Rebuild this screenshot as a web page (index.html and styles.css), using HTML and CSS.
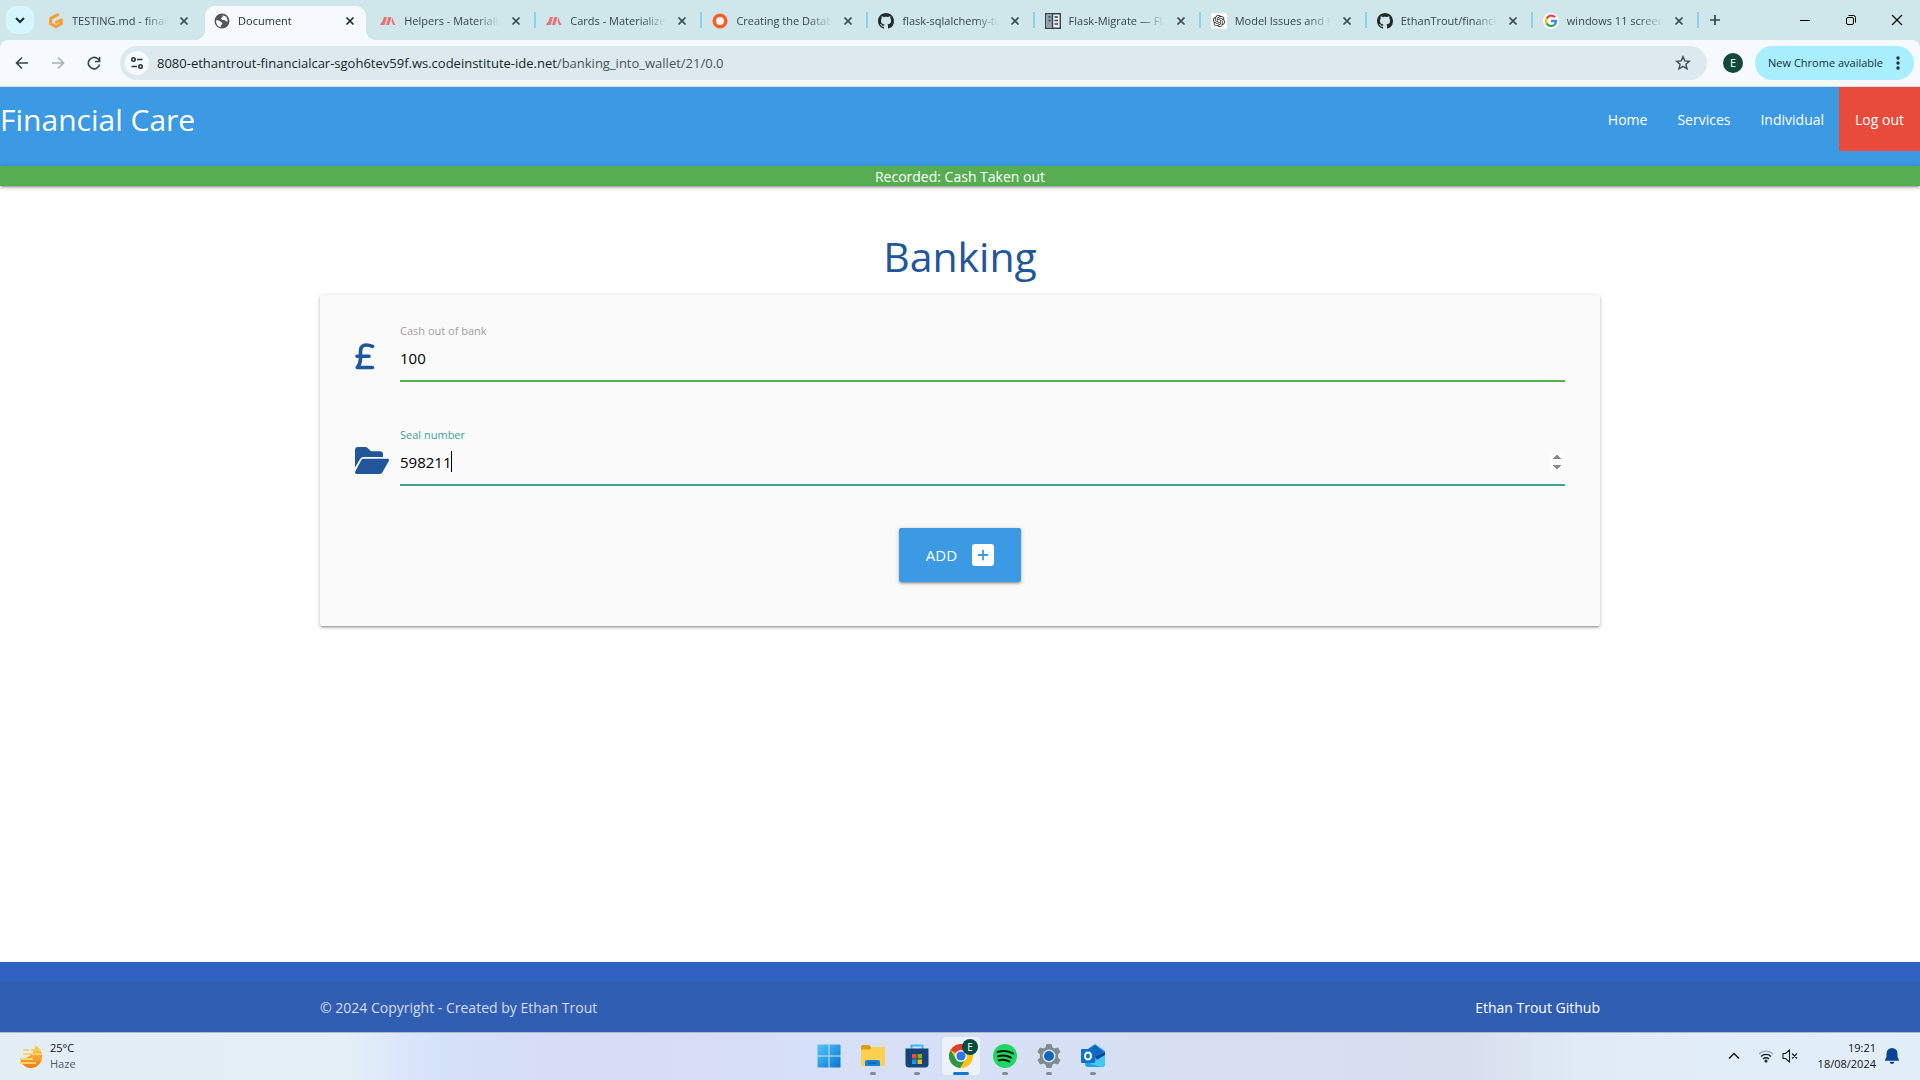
FILE: index.html
```html
<!DOCTYPE html>
<html lang="en">
<head>
<meta charset="utf-8">
<meta name="viewport" content="width=device-width, initial-scale=1">
<title>Document</title>
<link rel="stylesheet" href="styles.css">
</head>
<body>
<svg class="defs" aria-hidden="true">
  <symbol id="close" viewBox="0 0 10 10"><path d="M1.5 1.5l7 7M8.500 1.500l-7 7" fill="none" stroke="currentColor" stroke-width="1.700"/></symbol>
  <symbol id="github" viewBox="0 0 16 16"><path fill="#24292f" d="M8 0C3.580 0 0 3.580 0 8c0 3.540 2.290 6.530 5.470 7.590.4.070.55-.17.55-.38 0-.19-.01-.82-.01-1.490-2.010.37-2.530-.49-2.690-.94-.09-.23-.48-.94-.82-1.130-.28-.15-.68-.52-.01-.53.63-.01 1.080.58 1.230.82.72 1.210 1.870.87 2.330.66.07-.52.28-.87.51-1.070-1.780-.2-3.640-.89-3.640-3.950 0-.87.31-1.590.82-2.150-.08-.2-.36-1.020.08-2.120 0 0 .67-.21 2.200.82.64-.18 1.320-.27 2-.27s1.360.09 2 .27c1.530-1.040 2.200-.82 2.200-.82.44 1.100.16 1.920.08 2.120.51.56.82 1.270.82 2.150 0 3.070-1.870 3.750-3.650 3.950.29.25.54.73.54 1.480 0 1.070-.01 1.930-.01 2.200 0 .21.15.46.55.38A8 8 0 0 0 16 8c0-4.420-3.580-8-8-8z"/></symbol>
  <symbol id="materialize" viewBox="0 0 16 16"><path fill="#ee6e73" d="M4 4h3L4.500 12h-3.500zM8.500 4h3L9 12H6zM11.500 8l1-3.500 1.200 4 1.800 3.500h-2.500zM0 12l1.500-3 .8 3z"/></symbol>
</svg>

<header class="browser">
  <div class="tabstrip">
    <button class="tab-search" aria-label="Search tabs"><svg width="12" height="12" viewBox="0 0 12 12"><path d="M2 4l4 4 4-4" fill="none" stroke="#1b2b30" stroke-width="2"/></svg></button>
    <div class="tabs">
      <div class="tab no-divider"><svg class="favicon" viewBox="0 0 16 16"><path d="M9.500 1.800L2.700 5.400v5.400L8 13.800l5.300-3V6.800L8.500 9.300" fill="none" stroke="#fb9c33" stroke-width="3" stroke-linejoin="round" stroke-linecap="round"/></svg><span class="tab-title">TESTING.md - financial care</span><button class="tab-close" aria-label="Close tab"><svg><use href="#close"/></svg></button></div>
      <div class="tab active"><svg class="favicon" viewBox="0 0 16 16"><circle cx="8" cy="8" r="7.500" fill="#50555a"/><path d="M2 7.200l3 .3 2.300 1.500 1.200 1.800-1.700 1.700v1.700C4 13.500 1.700 11 2 7.200zM8.500 2.200l3.800 1.600 1.700 4.700-2.200-.3L10.500 7H8.300L6.800 5.300 8.800 4z" fill="#f6fafe"/></svg><span class="tab-title">Document</span><button class="tab-close" aria-label="Close tab"><svg><use href="#close"/></svg></button></div>
      <div class="tab"><svg class="favicon"><use href="#materialize"/></svg><span class="tab-title">Helpers - Materialize</span><button class="tab-close" aria-label="Close tab"><svg><use href="#close"/></svg></button></div>
      <div class="tab"><svg class="favicon"><use href="#materialize"/></svg><span class="tab-title">Cards - Materialize</span><button class="tab-close" aria-label="Close tab"><svg><use href="#close"/></svg></button></div>
      <div class="tab"><svg class="favicon" viewBox="0 0 16 16"><circle cx="8" cy="8" r="5.700" fill="#fff" stroke="#ff5b22" stroke-width="3.600"/></svg><span class="tab-title">Creating the Database</span><button class="tab-close" aria-label="Close tab"><svg><use href="#close"/></svg></button></div>
      <div class="tab"><svg class="favicon"><use href="#github"/></svg><span class="tab-title">flask-sqlalchemy-tutorial</span><button class="tab-close" aria-label="Close tab"><svg><use href="#close"/></svg></button></div>
      <div class="tab"><svg class="favicon" viewBox="0 0 16 16"><path d="M.7.7h14.600v14.600H.7z" fill="#eef3f5" stroke="#394149" stroke-width="1.400"/><path d="M1.500 1.500H7v13H1.500z" fill="#8fa3b0"/><path d="M7.500 1v14M3.500 4h2M3.500 7.500h2M9.500 4h3.500M9.500 7.500h3.500M9.500 11h3.500" stroke="#394149" stroke-width="1.400"/></svg><span class="tab-title">Flask-Migrate — Flask</span><button class="tab-close" aria-label="Close tab"><svg><use href="#close"/></svg></button></div>
      <div class="tab"><svg class="favicon" viewBox="-4 -4 32 32"><rect x="-4" y="-4" width="32" height="32" rx="4" fill="#fff"/><path fill="#222" d="M22.282 9.821a5.985 5.985 0 0 0-.516-4.910 6.046 6.046 0 0 0-6.510-2.900A6.065 6.065 0 0 0 4.981 4.182a5.985 5.985 0 0 0-3.998 2.900 6.046 6.046 0 0 0 .743 7.097 5.980 5.980 0 0 0 .510 4.911 6.051 6.051 0 0 0 6.515 2.900A5.985 5.985 0 0 0 13.260 24a6.056 6.056 0 0 0 5.772-4.206 5.990 5.990 0 0 0 3.998-2.900 6.056 6.056 0 0 0-.747-7.073zM13.260 22.430a4.476 4.476 0 0 1-2.876-1.041l.142-.080 4.778-2.758a.795.795 0 0 0 .393-.681v-6.737l2.020 1.169a.071.071 0 0 1 .038.052v5.583a4.504 4.504 0 0 1-4.495 4.493zM3.600 18.304a4.470 4.470 0 0 1-.535-3.014l.142.085 4.783 2.759a.771.771 0 0 0 .780 0l5.843-3.369v2.332a.080.080 0 0 1-.033.062L9.740 19.950a4.500 4.500 0 0 1-6.140-1.646zM2.341 7.896a4.485 4.485 0 0 1 2.366-1.973V11.600a.766.766 0 0 0 .388.677l5.814 3.354-2.020 1.169a.076.076 0 0 1-.071 0l-4.830-2.787A4.504 4.504 0 0 1 2.341 7.896zm16.596 3.856l-5.833-3.388L15.119 7.200a.076.076 0 0 1 .071 0l4.830 2.791a4.494 4.494 0 0 1-.676 8.105v-5.678a.790.790 0 0 0-.407-.666zm2.010-3.023l-.141-.085-4.774-2.782a.776.776 0 0 0-.785 0L9.409 9.230V6.897a.066.066 0 0 1 .028-.061l4.830-2.787a4.500 4.500 0 0 1 6.680 4.660zM8.307 12.863l-2.020-1.164a.080.080 0 0 1-.038-.057V6.075a4.500 4.500 0 0 1 7.375-3.453l-.142.080L8.704 5.460a.795.795 0 0 0-.393.681zm1.097-2.365l2.602-1.500 2.607 1.500v2.999l-2.597 1.500-2.607-1.500z"/></svg><span class="tab-title">Model Issues and Fixes</span><button class="tab-close" aria-label="Close tab"><svg><use href="#close"/></svg></button></div>
      <div class="tab"><svg class="favicon"><use href="#github"/></svg><span class="tab-title">EthanTrout/financial-care</span><button class="tab-close" aria-label="Close tab"><svg><use href="#close"/></svg></button></div>
      <div class="tab"><svg class="favicon" viewBox="0 0 16 16"><circle cx="8" cy="8" r="8" fill="#fff"/><g fill="none" stroke-width="2.300"><path d="M12 4.300A5 5 0 0 0 3.700 5.600" stroke="#ea4335"/><path d="M3.700 5.400a5 5 0 0 0 0 5.200" stroke="#fbbc04"/><path d="M3.600 10.400a5 5 0 0 0 7.600 1.500" stroke="#34a853"/><path d="M8 8h5a5 5 0 0 1-1.800 4" stroke="#4285f4"/></g></svg><span class="tab-title">windows 11 screenshot</span><button class="tab-close" aria-label="Close tab"><svg><use href="#close"/></svg></button></div>
    </div>
    <button class="new-tab" aria-label="New tab"><svg width="12" height="12" viewBox="0 0 12 12"><path d="M6 1v10M1 6h10" stroke="#33474c" stroke-width="1.700"/></svg></button>
    <div class="window-controls">
      <button aria-label="Minimize"><svg width="12" height="12" viewBox="0 0 12 12"><path d="M1 6.500h10" stroke="#000"/></svg></button>
      <button aria-label="Restore"><svg width="12" height="12" viewBox="0 0 12 12"><path d="M3.500 1.500h5a2 2 0 0 1 2 2v5" fill="none" stroke="#000"/><rect x="1.500" y="3.500" width="7" height="7" rx="1.500" fill="none" stroke="#000"/></svg></button>
      <button aria-label="Close"><svg width="12" height="12" viewBox="0 0 12 12"><path d="M1 1l10 10M11 1L1 11" stroke="#000" stroke-width="1.100"/></svg></button>
    </div>
  </div>
  <div class="toolbar">
    <div class="nav-buttons">
      <button aria-label="Back"><svg width="14" height="14" viewBox="0 0 14 14"><path d="M13 7H2M7 1.500L1.500 7 7 12.500" fill="none" stroke="#2f464b" stroke-width="1.600"/></svg></button>
      <button aria-label="Forward"><svg width="14" height="14" viewBox="0 0 14 14"><path d="M1 7h11M7 1.500L12.500 7 7 12.500" fill="none" stroke="#a5afb3" stroke-width="1.600"/></svg></button>
      <button aria-label="Reload"><svg width="14" height="14" viewBox="0 0 14 14"><path d="M12.600 8.500A5.700 5.700 0 1 1 11 3l1.500 1.500M12.600 1v4.500H8" fill="none" stroke="#2f464b" stroke-width="1.600"/></svg></button>
    </div>
    <div class="omnibox">
      <button class="site-info" aria-label="View site information"><svg width="14" height="14" viewBox="0 0 14 14"><g fill="none" stroke="#26383d" stroke-width="1.600"><circle cx="3.500" cy="3.500" r="1.700"/><path d="M7 3.500h5.500M1.500 10.500H7"/><circle cx="10.500" cy="10.500" r="1.700"/></g></svg></button>
      <span class="url"><span class="host">8080-ethantrout-financialcar-sgoh6tev59f.ws.codeinstitute-ide.net</span>/banking_into_wallet/21/0.0</span>
      <button class="star" aria-label="Bookmark this tab"><svg width="16" height="16" viewBox="0 0 16 16"><path d="M8 1.700l1.800 4.200 4.600.4-3.500 3 1.100 4.500L8 11.400l-4 2.400 1.100-4.500-3.500-3 4.600-.4z" fill="none" stroke="#3b4b50" stroke-width="1.400"/></svg></button>
    </div>
    <button class="profile" aria-label="Profile">E</button>
    <button class="update">New Chrome available<svg width="4" height="14" viewBox="0 0 4 14" fill="#173238"><circle cx="2" cy="2" r="1.700"/><circle cx="2" cy="7" r="1.700"/><circle cx="2" cy="12" r="1.700"/></svg></button>
  </div>
</header>

<div class="page">
  <nav class="site-nav">
    <a class="brand" href="#">Financial Care</a>
    <ul class="menu">
      <li><a href="#">Home</a></li>
      <li><a href="#">Services</a></li>
      <li><a href="#">Individual</a></li>
      <li><a class="logout" href="#">Log out</a></li>
    </ul>
  </nav>
  <div class="flash" role="status">Recorded: Cash Taken out</div>

  <main class="container">
    <h3 class="heading">Banking</h3>
    <form class="card">
      <div class="field">
        <svg class="prefix" viewBox="0 0 34 27"><path d="M17.500 3.400C10 .2 5.500 2.500 5.500 8v7.500c0 4-1 6.500-3.200 9H17.500M2 13.200h12" fill="none" stroke="#21569b" stroke-width="3.600" stroke-linecap="round" stroke-linejoin="round"/></svg>
        <label for="cash">Cash out of bank</label>
        <input class="valid" id="cash" type="text" inputmode="numeric" value="100">
      </div>
      <div class="field focused">
        <svg class="prefix" viewBox="0 0 34 27" fill="#21569b"><path d="M0 20.500V3a3 3 0 0 1 3-3h7.500a3 3 0 0 1 2.100.9l2.500 2.500c.6.600 1.300.9 2.100.9H25a3 3 0 0 1 3 3V10H8.500a4 4 0 0 0-3.400 2z"/><path d="M8.300 11.800H32.500c1.200 0 2 1.300 1.300 2.300l-6.500 11.300a3 3 0 0 1-2.600 1.500H1.500C.3 26.900-.4 25.600.2 24.600L6.400 13a2 2 0 0 1 1.900-1.200z"/></svg>
        <label for="seal">Seal number</label>
        <input id="seal" type="number" value="598211">
        <span class="caret"></span>
      </div>
      <button class="submit" type="button">ADD<svg width="22" height="22" viewBox="0 0 22 22"><rect width="22" height="22" rx="3" fill="#fff"/><path d="M11 6.500v9M6.500 11h9" stroke="#3c99e4" stroke-width="1.800" stroke-linecap="round"/></svg></button>
    </form>
  </main>

  <footer class="site-footer">
    <div class="copyright"><div class="container footer-row"><span>© 2024 Copyright - Created by Ethan Trout</span><a href="#">Ethan Trout Github</a></div></div>
  </footer>
</div>

<div class="taskbar">
  <div class="weather">
    <svg width="24" height="24" viewBox="0 0 24 24"><defs><linearGradient id="sun" x2="0" y2="1"><stop stop-color="#ffd34e"/><stop offset="1" stop-color="#f37a12"/></linearGradient></defs><path d="M16 1c5 3 7 7 7 11a11 11 0 0 1-22 2c5 2 15-3 15-13z" fill="url(#sun)"/><path d="M4 6h6M12 6h10M4 10h18M1 15h13M1 19h16" stroke="#f6d36b" stroke-width="2"/></svg>
    <div><div>25°C</div><div class="muted">Haze</div></div>
  </div>
  <div class="apps">
    <button aria-label="Start"><svg viewBox="0 0 24 24"><defs><linearGradient id="win" x2="1" y2="1"><stop stop-color="#52c8fa"/><stop offset="1" stop-color="#0874cf"/></linearGradient></defs><path d="M.5.500H11.500V11.500H.5zM12.500.500h11v11h-11zM.5 12.500h11v11H.5zM12.500 12.500h11v11h-11z" fill="url(#win)"/></svg></button>
    <button class="open" aria-label="File Explorer"><svg viewBox="0 0 24 24"><path d="M0 3a2 2 0 0 1 2-2h6l3 3v4H0z" fill="#dc9d10"/><path d="M0 5.500h9L11 3h13v19H0z" fill="#ffd050"/><path d="M4 22v-4a2 2 0 0 1 2-2h11a2 2 0 0 1 2 2v4z" fill="#1683d8"/><path d="M7.500 19h8" stroke="#0b61ad" stroke-width="1.500"/></svg></button>
    <button class="open" aria-label="Microsoft Store"><svg viewBox="0 0 24 24"><path d="M6.500 6V1.500h11V6" fill="none" stroke="#35bdf0" stroke-width="2"/><path d="M.5 4.500h23V20a3.500 3.500 0 0 1-3.500 3.500H4A3.500 3.500 0 0 1 .5 20z" fill="#17437c"/><path d="M7 10h4.500v4.500H7z" fill="#f25022"/><path d="M12.500 10H17v4.500h-4.500z" fill="#7fba00"/><path d="M7 15.500h4.500V20H7z" fill="#00a4ef"/><path d="M12.500 15.500H17V20h-4.500z" fill="#ffb900"/></svg></button>
    <button class="open current" aria-label="Google Chrome"><svg viewBox="0 0 24 24"><circle cx="12" cy="12" r="12" fill="#fbc116"/><path d="M12 12L1.600 6A12 12 0 0 1 22.400 6z" fill="#e33b2e"/><path d="M1.600 6A12 12 0 0 0 11 24l5.500-9L12 12 6.800 15z" fill="#289848"/><circle cx="12" cy="12" r="6" fill="#fff"/><circle cx="12" cy="12" r="4.600" fill="#2b78ee"/></svg><span class="badge">E</span></button>
    <button class="open" aria-label="Spotify"><svg viewBox="0 0 24 24"><circle cx="12" cy="12" r="12" fill="#1ed760"/><path d="M4.500 8c5-1.500 11-1 15.500 1.500M5 12.300c4.500-1.300 9-.8 13 1.400M5.800 16.200c3.800-1 7.200-.6 10.500 1.200" fill="none" stroke="#07150b" stroke-width="2" stroke-linecap="round"/></svg></button>
    <button class="open" aria-label="Settings"><svg viewBox="0 0 24 24"><path d="M9.500 0h5l1 3.500 2 1L21 3.500 23.500 8l-2.500 2.500v3l2.500 2.500-2.500 4.500-3.500-1-2 1-1 3.500h-5l-1-3.500-2-1-3.500 1L.5 16 3 13.500v-3L.5 8 3 3.500l3.500 1 2-1z" fill="#818a92"/><circle cx="12" cy="12" r="6.500" fill="#dce7ef"/><circle cx="12" cy="12" r="5" fill="#1565b8"/></svg></button>
    <button class="open" aria-label="Outlook"><svg viewBox="0 0 24 24"><path d="M4 7l10-7 10 7v13a3 3 0 0 1-3 3H7a3 3 0 0 1-3-3z" fill="#27a4e8"/><path d="M4 7l10-6 9 7-9 6z" fill="#1266bc"/><path d="M14 13l10-5v6l-6 3z" fill="#0c459e"/><path d="M9 20l15-9v9a3 3 0 0 1-3 3z" fill="#43c9f2"/><rect y="5" width="14" height="14" rx="1" fill="#0c70cf"/><ellipse cx="7" cy="12" rx="3" ry="3.500" fill="none" stroke="#fff" stroke-width="2"/></svg></button>
  </div>
  <div class="tray">
    <button class="chevron" aria-label="Show hidden icons"><svg width="12" height="12" viewBox="0 0 12 12"><path d="M1 8.500l5-5 5 5" fill="none" stroke="#111" stroke-width="1.400"/></svg></button>
    <svg class="wifi" width="16" height="14" viewBox="0 0 16 14"><g fill="none" stroke="#15202a" stroke-width="1.300"><path d="M1 5a10 10 0 0 1 14 0" stroke="#9da8b0"/><path d="M3 7.500a7 7 0 0 1 10 0M5 10a4.200 4.200 0 0 1 6 0"/></g><circle cx="8" cy="12" r="1.500" fill="#15202a"/></svg>
    <svg width="16" height="14" viewBox="0 0 16 14"><path d="M1 4.500h2.500L7.500 1v12L3.500 9.500H1zM10 4.500l5 5M15 4.500l-5 5" fill="none" stroke="#15202a" stroke-width="1.100"/></svg>
    <div class="clock"><div>19:21</div><div>18/08/2024</div></div>
    <svg class="bell" width="14" height="16" viewBox="0 0 14 16"><path d="M7 0a5.500 5.500 0 0 1 5.500 5.500V9l1.500 3v.800H0V12l1.500-3V5.500A5.500 5.500 0 0 1 7 0zM4.800 13.800h4.400a2.200 2.200 0 0 1-4.400 0z" fill="#0a4594"/></svg>
  </div>
</div>
</body>
</html>
```
FILE: styles.css
```css
* { box-sizing: border-box; }

body {
  margin: 0;
  min-height: 100vh;
  display: flex;
  flex-direction: column;
  background: #fff;
  font: 14px/20px "Open Sans", "Noto Sans", sans-serif;
}

button {
  border: 0;
  padding: 0;
  margin: 0;
  background: none;
  color: inherit;
  font: inherit;
  display: flex;
  align-items: center;
  justify-content: center;
}

a { color: inherit; text-decoration: none; }
svg { display: block; flex: none; }
.defs { width: 0; height: 0; position: absolute; }

/* Browser frame */
.browser { background: #cfe6eb; font-size: 11px; color: #33474c; }

.tabstrip { display: flex; height: 40px; align-items: center; }

.tab-search {
  width: 28px;
  height: 28px;
  margin: 0 6px;
  border-radius: 10px;
  background: #d6f6ff;
}

.tabs { display: flex; height: 100%; align-items: flex-end; flex: 0 1 1660px; min-width: 0; }

.tab {
  flex: 1 1 0;
  min-width: 0;
  height: 34px;
  padding: 0 10px 4px 9px;
  display: flex;
  align-items: center;
  gap: 8px;
  background: linear-gradient(#87d5e8, #87d5e8) right 1px top 6px / 2px 16px no-repeat;
}

.tab.no-divider { background: none; padding-left: 8px; }

.tab.active {
  color: #1c2b2f;
  background: #f6fafe;
  border-radius: 10px 10px 0 0;
  margin-right: 5px;
  padding-right: 5px;
  position: relative;
}

/* Outward curves at the foot of the selected tab */
.tab.active::before,
.tab.active::after {
  content: "";
  position: absolute;
  bottom: 0;
  width: 10px;
  height: 10px;
}
.tab.active::before { right: 100%; background: radial-gradient(circle at 0 0, transparent 10px, #f6fafe 10px); }
.tab.active::after { left: 100%; background: radial-gradient(circle at 100% 0, transparent 10px, #f6fafe 10px); }

.favicon { width: 16px; height: 16px; }

.tab-title {
  flex: 1;
  min-width: 0;
  overflow: hidden;
  white-space: nowrap;
  mask-image: linear-gradient(to left, transparent, #000 24px);
}

.tab-close { width: 16px; height: 16px; margin-right: 3px; }
.tab-close svg { width: 10px; height: 10px; }
.new-tab { width: 30px; height: 28px; }

.window-controls { display: flex; height: 100%; margin-left: auto; }
.window-controls button { width: 46px; }

.toolbar {
  display: flex;
  align-items: center;
  height: 47px;
  padding: 0 6px 0 4px;
  background: #f6fafe;
  border-bottom: 1px solid #d5dfe4;
  border-radius: 8px 8px 0 0;
}

.nav-buttons { display: flex; }
.nav-buttons button { width: 36px; height: 34px; }

.omnibox {
  flex: 1;
  min-width: 0;
  display: flex;
  align-items: center;
  height: 34px;
  margin-left: 8px;
  padding: 0 16px 0 5px;
  border-radius: 17px;
  background: #dde9ed;
}

.site-info { width: 24px; height: 24px; border-radius: 50%; background: #f6fafe; }
.url { flex: 1; min-width: 0; overflow: hidden; white-space: nowrap; margin-left: 8px; font-size: 13px; color: #45555a; }
.host { color: #17272b; }

.profile {
  width: 20px;
  height: 20px;
  margin: 0 12px 0 16px;
  border-radius: 50%;
  background: #11483d;
  color: #fff;
}

.update {
  height: 34px;
  padding: 0 14px 0 13px;
  gap: 13px;
  border-radius: 17px;
  background: #a8eeff;
  color: #173238;
  white-space: nowrap;
}

/* Site */
.page { flex: 1; display: flex; flex-direction: column; }

.site-nav {
  display: flex;
  justify-content: space-between;
  height: 79px;
  background: #3c99e4;
  color: #fff;
  line-height: 62px;
}

.brand { padding-top: 2px; font-size: 30px; }
.menu { display: flex; margin: 0; padding: 0; list-style: none; }
.menu a { display: block; padding: 2px 15px 0; }
.menu .logout { padding: 2px 16px 0; background: #e94b3b; }

.flash {
  padding-top: 2px;
  background: #57ad52;
  color: #fff;
  line-height: 18px;
  text-align: center;
  box-shadow: 0 2px 2px 0 rgba(0, 0, 0, .14), 0 3px 1px -2px rgba(0, 0, 0, .12), 0 1px 5px 0 rgba(0, 0, 0, .2);
}

.container { width: 70%; max-width: 1280px; margin: 0 auto; }

.heading {
  margin: 46px 0 15px;
  color: #21569b;
  font-size: 41px;
  font-weight: 400;
  line-height: 48px;
  text-align: center;
}

.card {
  display: flex;
  flex-direction: column;
  padding: 28px 35px 44px;
  border-radius: 2px;
  background: #fafafa;
  box-shadow: 0 2px 2px 0 rgba(0, 0, 0, .14), 0 3px 1px -2px rgba(0, 0, 0, .12), 0 1px 5px 0 rgba(0, 0, 0, .2);
}

.field {
  position: relative;
  display: grid;
  grid-template-columns: 45px 1fr;
  margin-bottom: 45px;
}

.field .prefix { grid-row: 1 / 3; align-self: end; width: 34px; height: 27px; margin-bottom: 12px; }
.field label { font-size: 11px; line-height: 16px; color: #9e9e9e; }

.field input {
  grid-column: 2;
  width: 100%;
  height: 43px;
  padding: 0 0 3px;
  border: 0;
  border-bottom: 2px solid #57ad52;
  outline: 0;
  background: none;
  color: #000;
  font: inherit;
  font-size: 15px;
}

.field.focused { margin-bottom: 42px; }
.field.focused label { color: #41a29a; }
.field.focused input { border-color: #41a29a; }
.field input::-webkit-inner-spin-button { opacity: 1; }

.caret {
  position: absolute;
  left: 96px;
  top: 24px;
  width: 1px;
  height: 21px;
  background: #000;
}

.submit {
  align-self: center;
  height: 54px;
  padding: 0 27px;
  gap: 15px;
  border-radius: 2px;
  background: #3c99e4;
  color: #fff;
  font-size: 15px;
  box-shadow: 0 2px 2px 0 rgba(0, 0, 0, .14), 0 3px 1px -2px rgba(0, 0, 0, .12), 0 1px 5px 0 rgba(0, 0, 0, .2);
}

.site-footer { margin-top: auto; padding-top: 20px; background: #3161bf; color: #fff; }
.copyright { padding-top: 2px; background: #305eb2; }
.footer-row { display: flex; justify-content: space-between; line-height: 48px; }
.footer-row span { color: rgba(255, 255, 255, .8); }

/* Taskbar */
.taskbar {
  display: grid;
  grid-template-columns: 1fr auto 1fr;
  align-items: center;
  height: 48px;
  padding-bottom: 2px;
  border-top: 1px solid #b2b9c4;
  background: linear-gradient(90deg, #e2edf6, #e4eff8 18%, #d4e2fa 23%, #d8dbf4 30%, #d6e0f7 42%, #d8dff2 65%, #d8dded 76%, #e0ebf7 82%, #e2eef8);
  color: #111;
  font-size: 11px;
  line-height: 16px;
}

.weather { display: flex; align-items: center; gap: 7px; padding-left: 19px; }
.muted { color: #555c63; }

.apps { display: flex; gap: 6px; padding-left: 2px; }

.apps button {
  position: relative;
  width: 38px;
  height: 38px;
  border-radius: 4px;
}

.apps svg { width: 24px; height: 24px; }
.apps .current { background: #edf1fa; }

.open::after {
  content: "";
  position: absolute;
  bottom: 0;
  width: 6px;
  height: 3px;
  border-radius: 2px;
  background: #868b94;
}
.current::after { width: 16px; background: #0d78d4; }

.badge {
  position: absolute;
  top: 2px;
  right: 2px;
  width: 16px;
  height: 16px;
  border-radius: 50%;
  background: #064c40;
  color: #fff;
  font-size: 10px;
}

.tray { display: flex; align-items: center; justify-content: flex-end; padding-right: 21px; }
.chevron { margin-right: 18px; }
.wifi { margin-right: 8px; }
.clock { margin: 0 9px 0 20px; text-align: right; }
```
